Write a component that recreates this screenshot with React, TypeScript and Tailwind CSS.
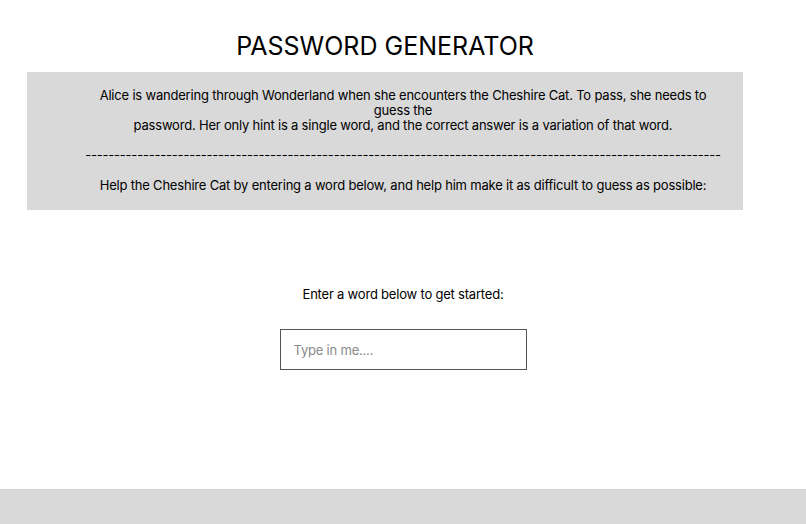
export default function App() {
  const dashes = "-".repeat(110);

  return (
    <div className="min-h-[524px] flex flex-col bg-white font-['Inter',sans-serif] text-black">
      {/* Header */}
      <div className="w-[716px] ml-[27px]">
        <h1 className="text-center text-[25px] leading-none pt-[34px] pb-[13px]">PASSWORD GENERATOR</h1>
        <div className="bg-[#d9d9d9] h-[138px] pl-[36px] pt-[16px] text-[13px] tracking-[-0.2px] leading-[15px] text-center">
          <p className="max-w-[615px] mx-auto">
            Alice is wandering through Wonderland when she encounters the Cheshire Cat. To pass, she needs to guess the
            <br />
            password. Her only hint is a single word, and the correct answer is a variation of that word.
          </p>
          <p className="mt-[15px] whitespace-nowrap">{dashes}</p>
          <p className="mt-[15px]">
            Help the Cheshire Cat by entering a word below, and help him make it as difficult to guess as possible:
          </p>
        </div>
      </div>

      {/* Main */}
      <div className="flex flex-col items-center pt-[76px] flex-1">
        <p className="text-[13px] tracking-[-0.2px] leading-[17px]">Enter a word below to get started:</p>
        <input
          type="text"
          placeholder="Type in me...."
          className="mt-[26px] w-[247px] h-[41px] border border-[#555] px-[13px] text-[13px] tracking-[-0.2px] placeholder:text-[#8a8a8a] outline-none"
        />
      </div>

      {/* Footer */}
      <div className="h-[35px] bg-[#d9d9d9] border-t border-[#cfcfcf]" />
    </div>
  );
}
